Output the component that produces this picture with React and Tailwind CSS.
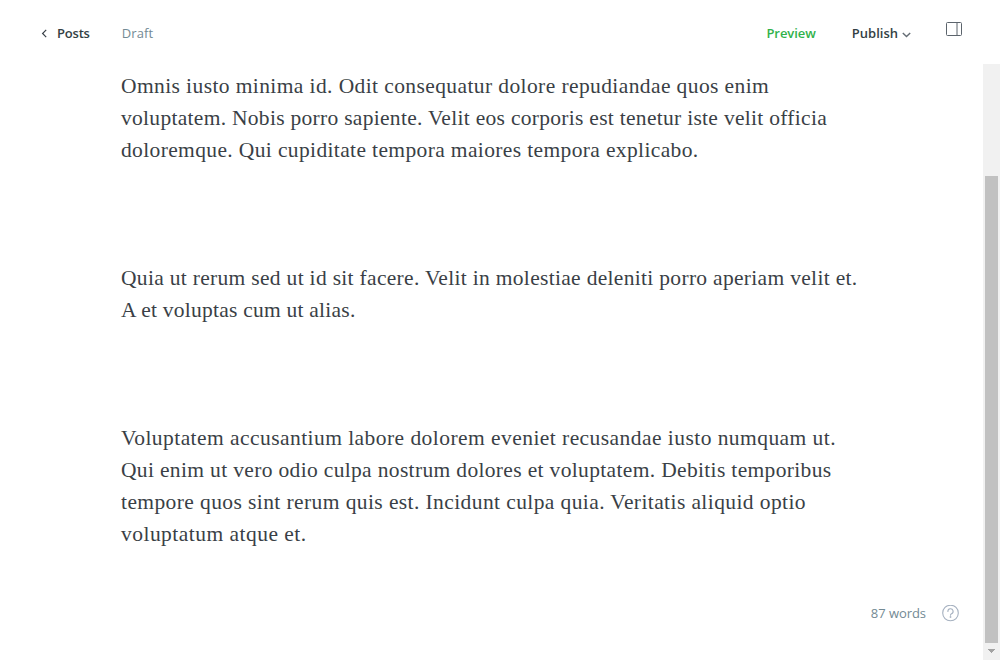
const paragraphs = [
  [
    ["Omnis iusto minima id. Odit consequatur dolore repudiandae quos enim", "tracking-[0.4px]"],
    ["voluptatem. Nobis porro sapiente. Velit eos corporis est tenetur iste velit officia", "tracking-[0.293px]"],
    ["doloremque. Qui cupiditate tempora maiores tempora explicabo.", "tracking-[0.366px]"],
  ],
  [
    ["Quia ut rerum sed ut id sit facere. Velit in molestiae deleniti porro aperiam velit et.", "tracking-[0.31px]"],
    ["A et voluptas cum ut alias.", "tracking-[0.237px]"],
  ],
  [
    ["Voluptatem accusantium labore dolorem eveniet recusandae iusto numquam ut.", "tracking-[0.446px]"],
    ["Qui enim ut vero odio culpa nostrum dolores et voluptatem. Debitis temporibus", "tracking-[0.34px]"],
    ["tempore quos sint rerum quis est. Incidunt culpa quia. Veritatis aliquid optio", "tracking-[0.404px]"],
    ["voluptatum atque et.", "tracking-[0.47px]"],
  ],
];

function Header() {
  return (
    <header className="flex h-16 shrink-0 items-start pl-[41px] pr-[38px] leading-5">
      <button className="mt-[23px] flex items-center font-semibold text-[#343f44]">
        <svg className="mr-[9px] h-[9px] w-[7px]" viewBox="0 0 7 9" fill="none" stroke="#394047" strokeWidth="1.2">
          <path d="M5.2 0.9 1.6 4.5l3.6 3.6" />
        </svg>
        <span className="tracking-[-0.2px]">Posts</span>
      </button>
      <span className="ml-8 mt-[23px] tracking-[0.1px] text-[#738a94]">Draft</span>
      <button className="ml-auto mt-[23px] font-semibold tracking-[-0.05px] text-[#30b24a]">Preview</button>
      <button className="ml-9 mt-[23px] flex items-center font-semibold text-[#343f44]">
        Publish
        <svg className="ml-1 mt-[3px] h-[6px] w-[9px]" viewBox="0 0 9 6" fill="none" stroke="#656d75" strokeWidth="1.4">
          <path d="M0.8 0.9 4.5 4.6 8.2 0.9" />
        </svg>
      </button>
      <button className="ml-[35px] mt-[22px]" aria-label="Settings">
        <svg className="block h-[14px] w-4" viewBox="0 0 16 14" fill="none" stroke="#5c646c" strokeWidth="1">
          <rect x="0.5" y="0.5" width="15" height="13" rx="1" />
          <path d="M11 0.5v13" />
        </svg>
      </button>
    </header>
  );
}

function Scrollbar() {
  return (
    <div className="flex w-[17px] shrink-0 flex-col items-center bg-[#f1f1f1]">
      <div className="mt-28 h-[467px] w-[13px] bg-[#c1c1c1]" />
      <svg className="mt-[6px] h-1 w-[7px]" viewBox="0 0 7 4" fill="#a3a3a3" shapeRendering="crispEdges">
        <path d="M0 0h7L3.5 4z" />
      </svg>
    </div>
  );
}

export default function App() {
  return (
    <div className="flex h-[660px] w-[1000px] flex-col overflow-hidden bg-white font-['Open_Sans',sans-serif] text-[13px]">
      <Header />
      <div className="flex min-h-0 flex-1">
        <main className="flex flex-1 flex-col pl-[121px] pt-[6px]">
          <article className="flex flex-col gap-24 font-['Liberation_Serif',serif] text-[21.5px] leading-8 text-[#3a3f46]">
            {paragraphs.map((lines) => (
              <p key={lines[0][0]}>
                {lines.map(([text, tracking]) => (
                  <span key={text} className={`block whitespace-nowrap ${tracking}`}>
                    {text}
                  </span>
                ))}
              </p>
            ))}
          </article>
          <footer className="mb-[37px] mr-[24px] mt-auto flex items-center justify-end leading-5 text-[#738a94]">
            <span className="tracking-[-0.05px]">87 words</span>
            <svg className="ml-4 h-[17px] w-[17px]" viewBox="0 0 17 17" fill="none" stroke="#a6b1c0" strokeWidth="1.1">
              <circle cx="8.5" cy="8" r="7.8" />
              <path d="M5.9 6.4a2.6 2.6 0 1 1 3.6 2.3c-.7.3-1 .7-1 1.5" strokeLinecap="round" />
              <circle cx="8.5" cy="12" r="0.35" />
            </svg>
          </footer>
        </main>
        <Scrollbar />
      </div>
    </div>
  );
}
